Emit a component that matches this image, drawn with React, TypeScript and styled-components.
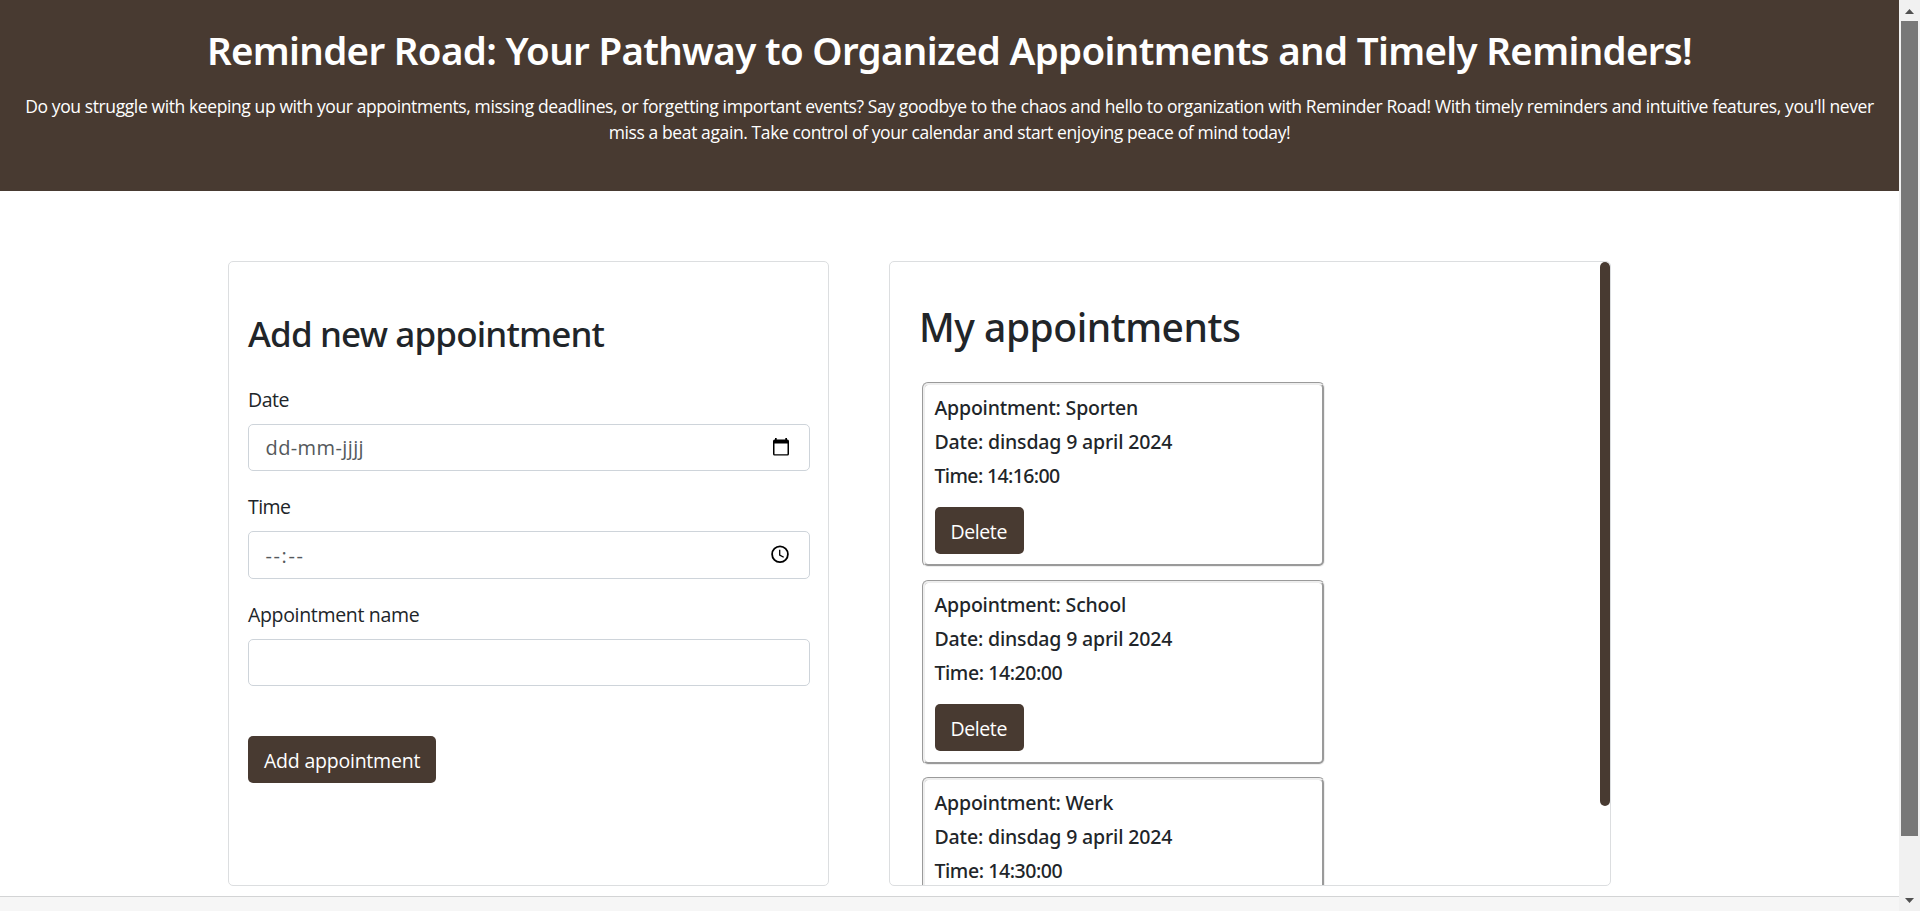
import React from 'react';
import styled, { createGlobalStyle } from 'styled-components';

const brown = '#483a31';
const ink = '#212529';
const bodyFont = '"Open Sans", "Noto Sans", sans-serif';
const headingFont = '"Noto Sans", "Open Sans", sans-serif';

const GlobalStyle = createGlobalStyle`
  *, *::before, *::after { box-sizing: border-box; }
  body { margin: 0; background: #fff; color: ${ink}; font: 400 19.5px ${bodyFont}; overflow: hidden; }
  h1, h2, p { margin: 0; }
`;

const Window = styled.div`
  display: flex;
  height: 911px;
`;

const Page = styled.div`
  flex: 1;
  min-width: 0;
  display: flex;
  flex-direction: column;
`;

const Header = styled.header`
  height: 191px;
  padding: 26px 24px 0;
  background: ${brown};
  color: #fff;
  text-align: center;
`;

const Title = styled.h1`
  font: 600 38.5px/48px ${headingFont};
  letter-spacing: -0.68px;
`;

const Intro = styled.p`
  margin-top: 19px;
  font-size: 17.5px;
  line-height: 26px;
  letter-spacing: -0.395px;
`;

const Main = styled.main`
  flex: 1;
  display: flex;
  align-items: flex-start;
  gap: 60px;
  padding: 70px 0 0 228px;
`;

const Panel = styled.section`
  height: 625px;
  border: 1px solid #dcdee0;
  border-radius: 5px;
`;

const FormPanel = styled(Panel)`
  width: 601px;
  padding: 50px 18px 0 19px;
`;

const FormTitle = styled.h2`
  margin-bottom: 29.3px;
  font: 500 35px/43px ${headingFont};
  letter-spacing: -0.85px;
`;

const Field = styled.div`
  margin-bottom: 20.5px;
`;

const Label = styled.label<{ $spacing: number }>`
  display: block;
  padding-top: 0.3px;
  margin-bottom: 9.2px;
  line-height: 30px;
  letter-spacing: ${(p) => p.$spacing}px;
`;

const InputBox = styled.div<{ $spacing?: number }>`
  display: flex;
  align-items: center;
  justify-content: space-between;
  height: 47.5px;
  padding: 0 20px 0 16.5px;
  border: 1px solid #ced4da;
  border-radius: 5px;
  color: #55595c;
  font-size: 20px;
  letter-spacing: ${(p) => p.$spacing ?? 0}px;
`;

const Button = styled.button<{ $width: number; $spacing: number }>`
  display: block;
  width: ${(p) => p.$width}px;
  height: 47px;
  padding: 2px 0 0 16px;
  border: 0;
  border-radius: 5px;
  background: ${brown};
  color: #fff;
  font: 400 19.5px ${bodyFont};
  letter-spacing: ${(p) => p.$spacing}px;
  text-align: left;
`;

const SubmitRow = styled.div`
  padding-top: 29px;
`;

const ListPanel = styled(Panel)`
  width: 722px;
  display: flex;
  justify-content: space-between;
  overflow: hidden;
`;

const ListContent = styled.div`
  width: 460px;
  padding: 41px 0 0 32px;
`;

const ListTitle = styled.h1`
  margin: 0 0 31px -3px;
  font: 500 39px/48px ${headingFont};
  letter-spacing: -0.48px;
`;

const Card = styled.article`
  width: 403px;
  height: 185px;
  margin-bottom: 12.5px;
  padding: 10.9px 9.5px 0;
  border: 3px groove #eee;
  border-radius: 6px;
`;

const CardLine = styled.p<{ $spacing: number }>`
  margin-bottom: 10px;
  font: 500 19.5px/24px ${headingFont};
  letter-spacing: ${(p) => p.$spacing}px;
  white-space: nowrap;
`;

const CardActions = styled.div`
  padding-top: 9.1px;
`;

const ListThumb = styled.div`
  width: 10px;
  height: 544px;
  border-radius: 5px;
  background: ${brown};
`;

const Footer = styled.footer`
  height: 15px;
  border-top: 1px solid #d3d4d5;
  background: #f6f6f6;
`;

const Scrollbar = styled.div`
  width: 21px;
  display: flex;
  flex-direction: column;
  align-items: center;
  background: #f1f1f1;
`;

const ScrollArrow = styled.svg`
  width: 21px;
  height: 21px;
  display: block;
  fill: #505050;
`;

const ScrollTrack = styled.div`
  flex: 1;
`;

const ScrollThumb = styled.div`
  width: 17px;
  height: 815px;
  background: #787878;
`;

const FieldIcon = styled.svg<{ $shift: number }>`
  display: block;
  width: 18px;
  height: 20px;
  margin-right: ${(p) => p.$shift}px;
`;

const CalendarIcon = () => (
  <FieldIcon viewBox="0 0 18 20" $shift={-1}>
    <path
      fill="#000"
      fillRule="evenodd"
      d="M3 0h1.7v1.600h8.600V0H15v1.600h.4A1.600 1.600 0 0 1 17 3.200v12.800a1.600 1.600 0 0 1-1.600 1.600H2.600A1.600 1.600 0 0 1 1 16V3.200A1.600 1.600 0 0 1 2.600 1.600H3zM2.500 5.500v10.700h13V5.500z"
    />
  </FieldIcon>
);

const ClockIcon = () => (
  <FieldIcon viewBox="0 0 18 20" $shift={0.5} fill="none" stroke="#000">
    <circle cx="9" cy="9.300" r="7.900" strokeWidth="1.800" />
    <path d="M8.700 4.800v5.200l4 2.300" strokeWidth="1.300" />
  </FieldIcon>
);

const appointments = [
  { name: 'Sporten', date: 'dinsdag 9 april 2024', time: '14:16:00', timeSpacing: -0.62 },
  { name: 'School', date: 'dinsdag 9 april 2024', time: '14:20:00', timeSpacing: -0.43 },
  { name: 'Werk', date: 'dinsdag 9 april 2024', time: '14:30:00', timeSpacing: -0.43 },
];

export default function App() {
  return (
    <>
      <GlobalStyle />
      <Window>
        <Page>
          <Header>
            <Title>Reminder Road: Your Pathway to Organized Appointments and Timely Reminders!</Title>
            <Intro>
              Do you struggle with keeping up with your appointments, missing deadlines, or forgetting important events?
              Say goodbye to the chaos and hello to organization with Reminder Road! With timely reminders and intuitive
              features, you'll never miss a beat again. Take control of your calendar and start enjoying peace of mind
              today!
            </Intro>
          </Header>
          <Main>
            <FormPanel>
              <FormTitle>Add new appointment</FormTitle>
              <Field>
                <Label $spacing={-0.5}>Date</Label>
                <InputBox $spacing={0.4}>
                  dd-mm-jjjj
                  <CalendarIcon />
                </InputBox>
              </Field>
              <Field>
                <Label $spacing={-0.55}>Time</Label>
                <InputBox $spacing={1.6}>
                  --:--
                  <ClockIcon />
                </InputBox>
              </Field>
              <Field>
                <Label $spacing={-0.33}>Appointment name</Label>
                <InputBox />
              </Field>
              <SubmitRow>
                <Button $width={188} $spacing={-0.22}>Add appointment</Button>
              </SubmitRow>
            </FormPanel>
            <ListPanel>
              <ListContent>
                <ListTitle>My appointments</ListTitle>
                {appointments.map((a) => (
                  <Card key={a.name}>
                    <CardLine $spacing={-0.19}>Appointment: {a.name}</CardLine>
                    <CardLine $spacing={-0.16}>Date: {a.date}</CardLine>
                    <CardLine $spacing={a.timeSpacing}>Time: {a.time}</CardLine>
                    <CardActions>
                      <Button $width={89} $spacing={-0.4}>Delete</Button>
                    </CardActions>
                  </Card>
                ))}
              </ListContent>
              <ListThumb />
            </ListPanel>
          </Main>
          <Footer />
        </Page>
        <Scrollbar>
          <ScrollArrow viewBox="0 0 21 21">
            <path d="M6 14 L10.500 9 L15 14z" />
          </ScrollArrow>
          <ScrollTrack>
            <ScrollThumb />
          </ScrollTrack>
          <ScrollArrow viewBox="0 0 21 21">
            <path d="M6 8 L15 8 L10.500 13z" />
          </ScrollArrow>
        </Scrollbar>
      </Window>
    </>
  );
}
